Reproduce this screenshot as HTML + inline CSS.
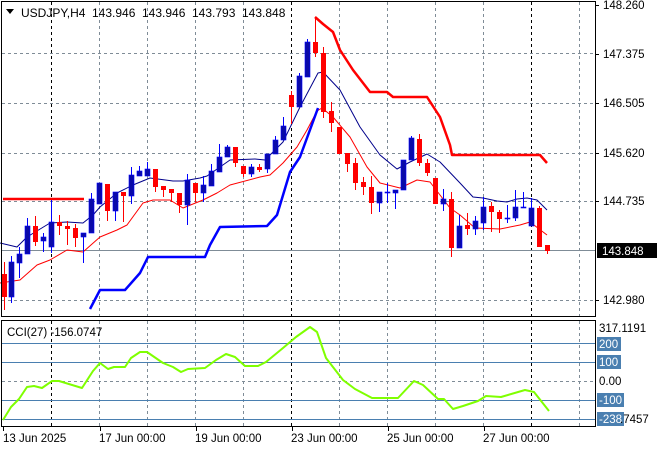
<!DOCTYPE html>
<html><head><meta charset="utf-8"><style>
html,body{margin:0;padding:0;background:#fff;width:660px;height:450px;overflow:hidden}
svg{display:block}
text{font-family:"Liberation Sans",sans-serif;font-size:11.5px;fill:#000}
.t{font-size:12px}
</style></head><body>
<svg id="s" width="660" height="450" xmlns="http://www.w3.org/2000/svg">
<rect width="660" height="450" fill="#fff"/>
<g id="grid" stroke="#7f8c97" stroke-dasharray="3,3" stroke-width="1" fill="none"></g>
<g id="lines" fill="none"></g>
<g id="candles"></g>
<rect x="1.5" y="1.5" width="594" height="315" fill="none" stroke="#000"/>
<rect x="1.5" y="320.5" width="594" height="106" fill="none" stroke="#000"/>
<g stroke="#000">
<line x1="595" y1="5.5" x2="599" y2="5.5"/><line x1="595" y1="54.5" x2="599" y2="54.5"/>
<line x1="595" y1="103.5" x2="599" y2="103.5"/><line x1="595" y1="153.5" x2="599" y2="153.5"/>
<line x1="595" y1="201.5" x2="599" y2="201.5"/><line x1="595" y1="300.5" x2="599" y2="300.5"/>
</g>
<g>
<text x="603" y="9">148.260</text>
<text x="603" y="58">147.375</text>
<text x="603" y="107">146.505</text>
<text x="603" y="157">145.620</text>
<text x="603" y="205">144.735</text>
<text x="603" y="304">142.980</text>
<rect x="597" y="243" width="60" height="15" fill="#000"/>
<text x="602" y="255" style="fill:#fff">143.848</text>
</g>
<polygon points="6,9 14,9 10,14" fill="#000"/>
<text class="t" x="21" y="17">USDJPY,H4</text>
<text class="t" x="92" y="17">143.946</text>
<text class="t" x="142" y="17">143.946</text>
<text class="t" x="192" y="17">143.793</text>
<text class="t" x="242" y="17">143.848</text>
<text x="7" y="336">CCI(27) -156.0747</text>
<text x="599" y="332">317.1191</text>
<rect x="597" y="337" width="24" height="14" fill="#4a7fb0"/><text x="599" y="348" style="fill:#fff">200</text>
<rect x="597" y="355" width="24" height="14" fill="#4a7fb0"/><text x="599" y="366" style="fill:#fff">100</text>
<text x="599" y="385">0.00</text>
<rect x="597" y="393" width="27" height="14" fill="#4a7fb0"/><text x="599" y="404" style="fill:#fff">-100</text>
<rect x="597" y="412" width="27" height="14" fill="#4a7fb0"/><text x="599" y="423" style="fill:#fff">-238</text>
<text x="620" y="423">.7457</text>
<g stroke="#000"><line x1="3.5" y1="427" x2="3.5" y2="431"/><line x1="100.5" y1="427" x2="100.5" y2="431"/><line x1="196.5" y1="427" x2="196.5" y2="431"/><line x1="292.5" y1="427" x2="292.5" y2="431"/><line x1="388.5" y1="427" x2="388.5" y2="431"/><line x1="484.5" y1="427" x2="484.5" y2="431"/></g>
<text x="3" y="442">13 Jun 2025</text>
<text x="99" y="442">17 Jun 00:00</text>
<text x="195" y="442">19 Jun 00:00</text>
<text x="291" y="442">23 Jun 00:00</text>
<text x="387" y="442">25 Jun 00:00</text>
<text x="483" y="442">27 Jun 00:00</text>
</svg>
<script>
var NS="http://www.w3.org/2000/svg";
function el(p,t,a){var e=document.createElementNS(NS,t);for(var k in a)e.setAttribute(k,a[k]);p.appendChild(e);return e;}
var g=document.getElementById('grid');
var vx=[51,99,147,195,243,291,339,387,435,483,531,579];
vx.forEach(function(x){var black=(x==51||x==291||x==531);
 el(g,'line',{x1:x+.5,y1:2,x2:x+.5,y2:316,stroke:black?'#000':'#7f8c97'});
 el(g,'line',{x1:x+.5,y1:321,x2:x+.5,y2:426,stroke:black?'#000':'#7f8c97'});});
[53,103,153,201,300].forEach(function(y){el(g,'line',{x1:2,y1:y+.5,x2:595,y2:y+.5});});
el(g,'line',{x1:2,y1:381.5,x2:595,y2:381.5});
el(g,'line',{x1:2,y1:250.5,x2:595,y2:250.5,stroke:'#7f8c97','stroke-dasharray':'none'});
var L=document.getElementById('lines');
[343.5,362.5,400.5,419.5].forEach(function(y){el(L,'line',{x1:2,y1:y,x2:595,y2:y,stroke:'#4a7fb0'});});
function pl(pts,c,w){el(L,'polyline',{points:pts,stroke:c,'stroke-width':w,'stroke-linejoin':'round'});}
pl("0,243 17,247 27,237 50,223 67,222 83,223 93,215 100,207 117,193 133,185 150,178 173,181 183,181 200,178 207,176 220,167 230,160 255,159 265,160 283,142 300,107 318,73 323,72 340,90 360,127 380,155 397,169 410,162 427,154 440,162 460,183 473,197 483,198 497,201 507,202 517,199 527,198 537,200 547,210","#00008b",1);
pl("0,283 20,280 37,265 50,260 67,250 83,252 100,237 117,230 127,225 143,203 153,200 170,200 183,208 203,200 217,193 230,185 260,177 270,175 283,163 297,147 307,130 317,111 322,108 333,117 350,137 367,167 380,183 400,188 417,180 430,182 440,195 450,208 460,215 475,228 500,229 520,225 530,222 547,235","#ff0000",1);
pl("90,309 100,290 125,290 140,273 148,257 205,257 210,245 220,227 267,226 277,215 290,172 300,157 318,108","#0000ff",2.5);
pl("3,199 84,199","#ff0000",2.5);
pl("315,17 323,24 333,32 340,50 353,70 370,92 387,92 393,97 427,97 440,117 450,145 452,155 540,155 547,163","#ff0000",2.5);
pl("3,420 11,407 19,399 27,387 34,386 42,388 52,381 59,381 82,388 93,371 100,363 108,369 114,367 125,367 131,358 140,352 147,352 163,363 173,367 181,372 188,369 205,368 216,360 226,354 235,357 245,366 258,366 266,362 283,348 296,337 310,327 317,332 326,358 343,380 355,389 372,398 398,398 414,381 423,385 438,399 444,399 453,409 463,406 478,401 486,396 501,397 525,390 534,392 549,411","#7fff00",2);
var C=[[4,274,297,262,310],[11,297,262,256,303],[19,263,254,247,278],[27,254,226,218,254],[35,226,242,216,246],[43,241,237,233,252],[51,247,222,200,253],[59,222,226,215,235],[67,226,229,221,245],[75,228,238,224,247],[83,237,233,233,263],[91,233,199,193,233],[99,204,183,183,204],[107,184,211,184,221],[115,211,192,192,221],[123,192,196,192,222],[131,196,175,167,204],[139,176,171,166,176],[147,176,169,162,176],[155,169,187,169,192],[163,186,190,186,197],[171,189,193,189,202],[179,193,205,193,213],[187,205,180,174,225],[195,183,193,183,202],[203,193,185,176,202],[211,186,171,164,186],[219,172,157,144,172],[227,157,147,145,157],[235,147,163,147,167],[243,166,174,166,177],[251,174,167,164,177],[259,167,170,164,172],[267,169,154,154,173],[275,154,140,136,154],[283,140,126,117,140],[291,95,107,91,124],[299,107,76,73,107],[307,77,42,39,77],[315,42,53,17,57],[323,53,112,47,118],[331,111,123,102,132],[339,127,154,127,154],[347,153,164,153,172],[355,163,183,158,190],[363,182,187,177,195],[371,187,203,176,214],[379,203,192,192,212],[387,193,192,183,203],[395,193,190,190,209],[403,190,160,160,190],[411,160,138,136,160],[419,139,163,134,166],[427,163,173,159,176],[435,178,204,178,204],[443,204,199,189,211],[451,199,248,192,257],[459,248,226,215,248],[467,225,229,213,235],[475,229,221,216,235],[483,223,207,197,230],[491,206,212,202,232],[499,212,219,210,233],[507,219,218,205,223],[515,218,207,190,221],[523,208,207,192,208],[531,226,208,198,226],[539,208,247,206,247],[547,245,251,245,254]];
var cg=document.getElementById('candles');
C.forEach(function(c){var x=c[0],o=c[1],cl=c[2],h=c[3],l=c[4];var up=cl<=o;var col=up?'#0a0aa8':'#ff0000';
 el(cg,'line',{x1:x+.5,y1:h,x2:x+.5,y2:l,stroke:up?'#0000ff':'#ff0000','stroke-width':1});
 var t=Math.min(o,cl),b=Math.max(o,cl);if(b-t<1)b=t+1;
 el(cg,'rect',{x:x-2,y:t,width:5,height:b-t,fill:col,stroke:up?'#0000ff':'none','stroke-width':up?0.6:0});});
</script>
</body></html>
